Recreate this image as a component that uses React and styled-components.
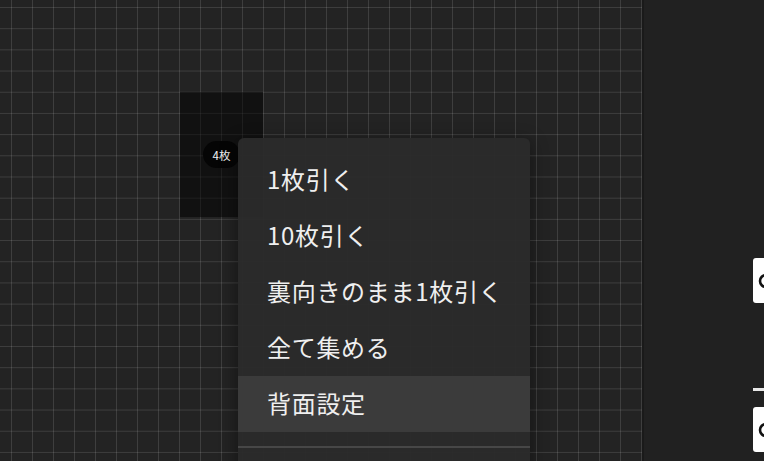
import React from "react";
import styled, { createGlobalStyle } from "styled-components";

const GlobalStyle = createGlobalStyle`
    html, body {
        margin: 0;
        padding: 0;
        background: #222;
        overflow: hidden;
    }
    body {
        font-family: "Noto Sans CJK JP", "Noto Sans", sans-serif;
    }
`;

const Layout = styled.div`
    display: flex;
    width: 764px;
    height: 461px;
    overflow: hidden;
`;

const Board = styled.main`
    position: relative;
    flex: 1;
    background-color: #232323;
    background-image: linear-gradient(
            to right,
            rgba(255, 255, 255, 0.12) 1px,
            transparent 1px
        ),
        linear-gradient(to bottom, rgba(255, 255, 255, 0.12) 1px, transparent 1px);
    background-size: 21px 21.2px;
    background-position: 11px 7px;
    border-right: 2px solid #1a1a1a;
`;

const Deck = styled.div`
    position: absolute;
    left: ${(p) => p.x}px;
    top: ${(p) => p.y}px;
    width: 83px;
    height: 125px;
    background: rgba(0, 0, 0, 0.5);
    display: flex;
    align-items: center;
    justify-content: center;
`;

const Count = styled.span`
    background: #050505;
    color: #f2f2f2;
    font-size: 11.5px;
    height: 27px;
    padding: 0 10px;
    border-radius: 14px;
    display: flex;
    align-items: center;
`;

const Menu = styled.ul`
    position: absolute;
    left: ${(p) => p.x}px;
    top: ${(p) => p.y}px;
    width: 292px;
    margin: 0;
    padding: 14px 0 0;
    list-style: none;
    background: rgba(43, 43, 43, 0.96);
    border-radius: 6px;
    box-shadow: 0 4px 18px rgba(0, 0, 0, 0.45);
`;

const Item = styled.li`
    height: 56px;
    display: flex;
    align-items: center;
    padding: 0 0 3px 29px;
    box-sizing: border-box;
    font-size: 24px;
    color: #efefef;
    letter-spacing: 0.7px;
    background: ${(p) => (p.active ? "#3b3b3b" : "transparent")};
`;

const Divider = styled.li`
    height: 2px;
    margin-top: 14px;
    background: #474747;
`;

const Spacer = styled.li`
    height: 40px;
`;

const Side = styled.aside`
    width: 120px;
    background: #212121;
    padding: 258px 0 0 109px;
    box-sizing: border-box;
    display: flex;
    flex-direction: column;
    overflow: hidden;
`;

const Tile = styled.div`
    width: 40px;
    height: 45px;
    background: #fff;
    border-radius: 3px;
    display: flex;
    align-items: center;
    padding-left: 4px;
    box-sizing: border-box;
    flex-shrink: 0;
`;

const Rule = styled.div`
    width: 40px;
    height: 3px;
    background: #e8e8e8;
    margin: 85px 0 16px;
    flex-shrink: 0;
`;

const Ring = () => (
    <svg width="18" height="18" viewBox="0 0 18 18">
        <circle cx="9" cy="9" r="6" fill="none" stroke="#111" strokeWidth="2.6" />
    </svg>
);

const actions = ["1枚引く", "10枚引く", "裏向きのまま1枚引く", "全て集める", "背面設定"];

export default function App() {
    return (
        <>
            <GlobalStyle />
            <Layout>
                <Board>
                    <Deck x={180} y={92}>
                        <Count>4枚</Count>
                    </Deck>
                    <Menu x={238} y={138}>
                        {actions.map((a, i) => (
                            <Item key={a} active={i === 4}>
                                {a}
                            </Item>
                        ))}
                        <Divider />
                        <Spacer />
                    </Menu>
                </Board>
                <Side>
                    <Tile>
                        <Ring />
                    </Tile>
                    <Rule />
                    <Tile>
                        <Ring />
                    </Tile>
                </Side>
            </Layout>
        </>
    );
}
